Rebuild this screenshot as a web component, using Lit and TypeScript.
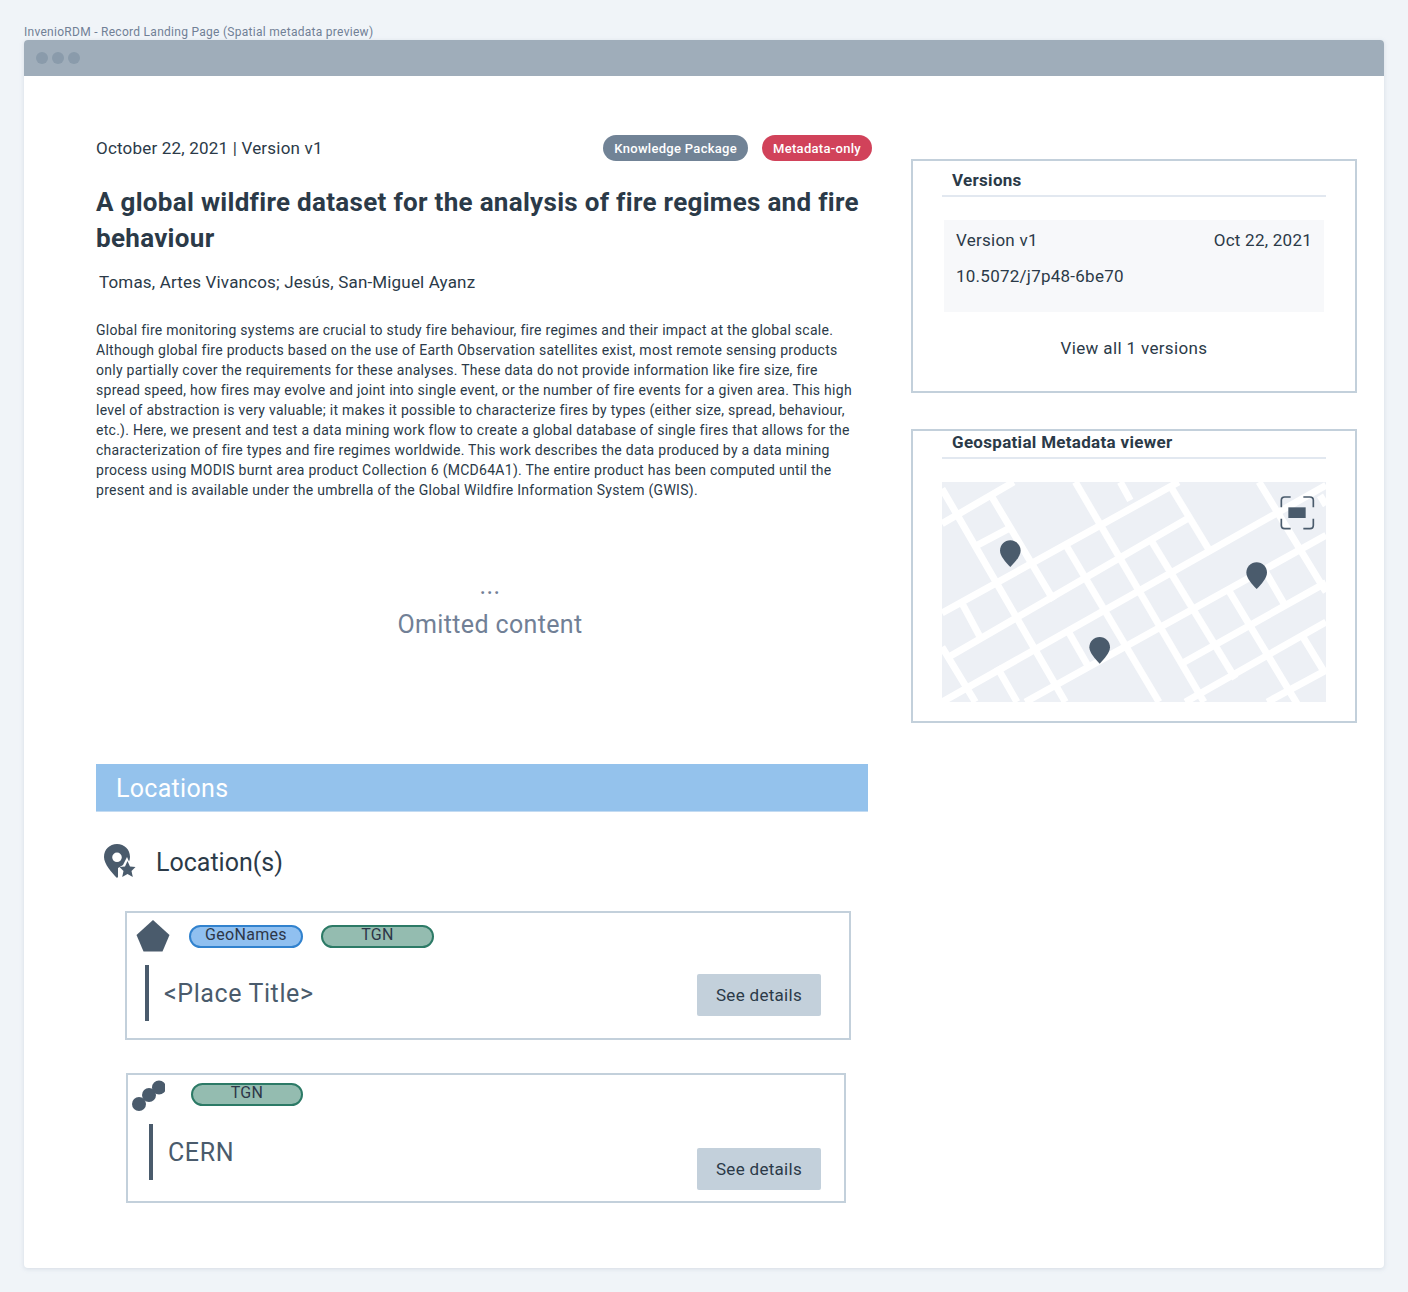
import { LitElement, html, css, svg } from 'lit';
import { customElement } from 'lit/decorators.js';

// street segments traced from the map, in 3x map units
const RISING = [
  [0, 125, 215, 0], [105, 190, 200, 140], [0, 393, 710, 0], [15, 528, 745, 105],
  [0, 660, 1152, 10], [250, 660, 1152, 160], [722, 543, 1152, 302], [730, 660, 1152, 420],
  [976, 660, 1152, 565],
];
const FALLING = [
  [0, 20, 370, 660], [150, 45, 335, 355], [400, 0, 786, 660], [375, 195, 651, 660],
  [535, 0, 565, 55], [685, 12, 808, 215], [624, 170, 880, 590], [951, 0, 1152, 330],
  [860, 325, 1065, 665], [971, 270, 1030, 372], [1080, 460, 1148, 572], [57, 358, 118, 472],
  [378, 447, 440, 555], [0, 495, 100, 660], [165, 555, 225, 660], [1134, 40, 1152, 70],
];
const PINS = [[205, 175], [944, 241], [473, 465]];

@customElement('app-root')
export class AppRoot extends LitElement {
  static styles = css`
    :host {
      display: block;
      min-height: 1292px;
      box-sizing: border-box;
      padding: 24px 24px 24px;
      background: #f0f4f8;
      font-family: Roboto, sans-serif;
      color: #2b3a48;
    }
    .caption {
      font-size: 12px;
      line-height: 16px;
      color: #718096;
      letter-spacing: 0.28px;
    }
    .frame {
      background: #fff;
      border-radius: 4px;
      box-shadow: 0 1px 4px rgba(160, 174, 192, 0.35);
      overflow: hidden;
      height: 1228px;
    }
    .titlebar {
      display: flex;
      align-items: center;
      gap: 4px;
      height: 36px;
      padding-left: 12px;
      background: #9fadba;
    }
    .titlebar i {
      width: 12px;
      height: 12px;
      border-radius: 50%;
      background: #8a9bab;
    }
    .body {
      display: grid;
      grid-template-columns: 775px 446px;
      column-gap: 40px;
      padding: 59px 0 0 72px;
    }
    .meta {
      display: flex;
      align-items: center;
      height: 26px;
      margin-right: -1px;
      font-size: 17px;
      letter-spacing: 0.2px;
    }
    .meta .date { flex: 1; }
    .pill {
      display: flex;
      align-items: center;
      height: 26px;
      padding: 0 11px;
      border-radius: 13px;
      font-size: 13px;
      font-weight: 500;
      color: #fff;
      background: #718396;
      letter-spacing: 0.3px;
    }
    .pill.red { background: #d1425a; margin-left: 14px; }
    h1 {
      margin: 23px 0 0;
      font-size: 26px;
      line-height: 36px;
      font-weight: 700;
      letter-spacing: 0.3px;
      width: 772px;
    }
    .authors {
      margin: 14px 0 0 3px;
      font-size: 17px;
      line-height: 24px;
      letter-spacing: 0.17px;
    }
    .abstract {
      margin: 26px 0 0;
      width: 772px;
      font-size: 14px;
      line-height: 20px;
      letter-spacing: 0.27px;
      white-space: pre-line;
    }
    .omitted {
      width: 788px;
      margin-top: 76px;
      text-align: center;
      font-size: 25px;
      color: #718096;
      letter-spacing: 0.35px;
    }
    .omitted div:first-child { line-height: 20px; }
    .omitted div:last-child { line-height: 40px; margin-top: 9px; }
    .bar {
      box-sizing: border-box;
      width: 772px;
      height: 48px;
      margin-top: 119px;
      padding: 1px 0 0 20px;
      display: flex;
      align-items: center;
      background: #94c2ec;
      border-bottom: 1px solid #c3dbf2;
      color: #fff;
      font-size: 25px;
      letter-spacing: 0.3px;
    }
    .loc-head {
      display: flex;
      align-items: center;
      gap: 20px;
      height: 40px;
      margin: 30px 0 0 8px;
      font-size: 25px;
    }
    .loc-head svg { width: 32px; height: 36px; }
    .card {
      position: relative;
      box-sizing: border-box;
      border: 2px solid #c3d0db;
      height: 129px;
      width: 726px;
      margin: 29px 0 0 29px;
      padding: 6px 0 0 9px;
    }
    .card.second {
      width: 720px;
      height: 130px;
      margin: 33px 0 0 30px;
      padding: 5px 0 0 3px;
    }
    .tags {
      display: flex;
      align-items: flex-start;
      height: 33px;
    }
    .shape { width: 34px; height: 34px; flex: none; }
    .tag {
      box-sizing: border-box;
      width: 113px;
      height: 23px;
      border-radius: 12px;
      border: 2px solid #2c7a66;
      background: #94bcb0;
      text-align: center;
      font-size: 16px;
      line-height: 15px;
      letter-spacing: 0.3px;
      color: #2d3748;
      margin: 6px 0 0 18px;
    }
    .tag.blue { border-color: #3182ce; background: #90c0f0; margin-left: 19px; width: 114px; }
    .second .tag { margin: 3px 0 0 26px; width: 112px; }
    .row {
      display: flex;
      justify-content: space-between;
      align-items: flex-start;
      margin: 13px 28px 0 9px;
    }
    .second .row { margin: 11px 23px 0 18px; }
    .second .button { margin-top: 24px; }
    .name {
      box-sizing: border-box;
      height: 56px;
      border-left: 4px solid #4a5b6c;
      padding-left: 15px;
      font-size: 25px;
      line-height: 58px;
      letter-spacing: 0.6px;
      color: #4a5b6c;
    }
    .button {
      width: 124px;
      height: 42px;
      margin-top: 9px;
      border-radius: 2px;
      background: #c3d0db;
      display: flex;
      align-items: center;
      justify-content: center;
      font-size: 17px;
      letter-spacing: 0.3px;
    }
    .side {
      box-sizing: border-box;
      border: 2px solid #c3d0db;
      padding: 0 29px;
    }
    .versions { height: 234px; margin-top: 24px; }
    .viewer { height: 294px; margin-top: 36px; }
    h2 {
      margin: 0;
      height: 36px;
      padding: 9px 0 0 10px;
      box-sizing: border-box;
      border-bottom: 2px solid #e2e8f0;
      font-size: 17px;
      line-height: 20px;
      font-weight: 700;
      letter-spacing: 0.3px;
    }
    .viewer h2 { height: 28px; padding-top: 1px; }
    .entry {
      margin: 23px 2px 0;
      height: 92px;
      box-sizing: border-box;
      padding: 0 12px;
      background: #f7f8fa;
      font-size: 17px;
      letter-spacing: 0.25px;
    }
    .entry div { display: flex; justify-content: space-between; line-height: 36px; }
    .entry div:first-child { padding-top: 2px; }
    .all {
      margin-top: 24px;
      text-align: center;
      font-size: 17px;
      line-height: 24px;
      letter-spacing: 0.35px;
    }
    .map {
      display: block;
      width: 384px;
      height: 220px;
      margin-top: 23px;
    }
  `;

  private renderMap() {
    return html`<svg class="map" viewBox="0 0 1152 660">
      <rect width="1152" height="660" fill="#edf0f5"></rect>
      ${[...RISING, ...FALLING].map(([x1, y1, x2, y2]) =>
        svg`<line x1=${x1} y1=${y1} x2=${x2} y2=${y2} stroke="#fff" stroke-width="21"></line>`)}
      ${PINS.map(([x, y]) =>
        svg`<path transform="translate(${x} ${y})" d="M0 0C17 0 31 14 31 31C31 46 14 66 0 80C-14 66 -31 46 -31 31C-31 14 -17 0 0 0Z" fill="#4a5b6c"></path>`)}
      <rect x="1039" y="76" width="52" height="32" fill="#4a5b6c"></rect>
      <path d="M1018 76V55Q1018 45 1028 45H1046M1084 45H1104Q1114 45 1114 55V76M1114 110V130Q1114 140 1104 140H1084M1046 140H1028Q1018 140 1018 130V110" fill="none" stroke="#4a5b6c" stroke-width="5"></path>
    </svg>`;
  }

  render() {
    return html`
      <div class="caption">InvenioRDM - Record Landing Page (Spatial metadata preview)</div>
      <div class="frame">
        <div class="titlebar"><i></i><i></i><i></i></div>
        <div class="body">
          <div>
            <div class="meta">
              <span class="date">October 22, 2021 | Version v1</span>
              <span class="pill">Knowledge Package</span>
              <span class="pill red">Metadata-only</span>
            </div>
            <h1>A global wildfire dataset for the analysis of fire regimes and fire behaviour</h1>
            <div class="authors">Tomas, Artes Vivancos; Jesús, San-Miguel Ayanz</div>
            <div class="abstract">Global fire monitoring systems are crucial to study fire behaviour, fire regimes and their impact at the global scale.
Although global fire products based on the use of Earth Observation satellites exist, most remote sensing products
only partially cover the requirements for these analyses. These data do not provide information like fire size, fire
spread speed, how fires may evolve and joint into single event, or the number of fire events for a given area. This high
level of abstraction is very valuable; it makes it possible to characterize fires by types (either size, spread, behaviour,
etc.). Here, we present and test a data mining work flow to create a global database of single fires that allows for the
characterization of fire types and fire regimes worldwide. This work describes the data produced by a data mining
process using MODIS burnt area product Collection 6 (MCD64A1). The entire product has been computed until the
present and is available under the umbrella of the Global Wildfire Information System (GWIS).</div>
            <div class="omitted"><div>...</div><div>Omitted content</div></div>
            <div class="bar">Locations</div>
            <div class="loc-head">
              <svg viewBox="0 0 32 36">
                <path fill-rule="evenodd" fill="#4a5b6c" d="M13 0C20.500 0 26 5.500 26 13C26 20 18 29 13 34C8 29 0 20 0 13C0 5.500 5.500 0 13 0ZM13 8.500A4.800 4.800 0 1 0 13 18.100A4.800 4.800 0 1 0 13 8.500Z"></path>
                <path fill="#fff" d="M23 13L27 22L33 23V36H14V24L19 21Z"></path>
                <path fill="#4a5b6c" d="M23.500 17L26 22.500L31.500 23L27.500 27L28.800 33L23.500 30L18.200 33L19.500 27L15.500 23L21 22.500Z"></path>
              </svg>
              <span>Location(s)</span>
            </div>
            <div class="card">
              <div class="tags">
                <svg class="shape" viewBox="0 0 34 34">
                  <path fill="#4a5b6c" d="M17 1L33.500 16L26.500 32.500H7.500L.5 16Z"></path>
                </svg>
                <div class="tag blue">GeoNames</div>
                <div class="tag">TGN</div>
              </div>
              <div class="row">
                <div class="name">&lt;Place Title&gt;</div>
                <div class="button">See details</div>
              </div>
            </div>
            <div class="card second">
              <div class="tags">
                <svg class="shape" viewBox="0 0 34 34">
                  <circle cx="8" cy="24" r="7" fill="#4a5b6c"></circle>
                  <circle cx="18" cy="15" r="7" fill="#4a5b6c"></circle>
                  <circle cx="28" cy="7.500" r="7" fill="#4a5b6c"></circle>
                </svg>
                <div class="tag">TGN</div>
              </div>
              <div class="row">
                <div class="name">CERN</div>
                <div class="button">See details</div>
              </div>
            </div>
          </div>
          <div>
            <div class="side versions">
              <h2>Versions</h2>
              <div class="entry">
                <div><span>Version v1</span><span>Oct 22, 2021</span></div>
                <div>10.5072/j7p48-6be70</div>
              </div>
              <div class="all">View all 1 versions</div>
            </div>
            <div class="side viewer">
              <h2>Geospatial Metadata viewer</h2>
              ${this.renderMap()}
            </div>
          </div>
        </div>
      </div>
    `;
  }
}
